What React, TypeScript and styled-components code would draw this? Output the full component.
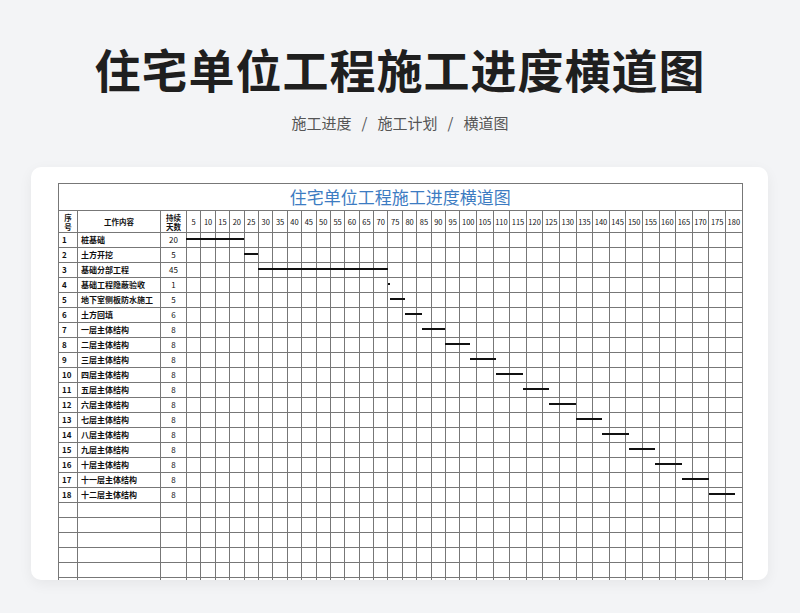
import styled, { createGlobalStyle } from "styled-components";

const GlobalStyle = createGlobalStyle`
  body {
    margin: 0;
    background: #f3f4f6;
    font-family: "Noto Sans CJK SC", "Noto Sans", sans-serif;
  }
`;

const Page = styled.div`
  width: 800px;
  height: 613px;
  display: flex;
  flex-direction: column;
  align-items: center;
  overflow: hidden;
`;

const Title = styled.h1`
  margin: 38px 0 0;
  font-size: 46px;
  line-height: 60px;
  font-weight: 700;
  color: #1f1f1f;
  letter-spacing: 1px;
`;

const Crumbs = styled.div`
  margin-top: 14px;
  display: flex;
  gap: 10px;
  font-size: 15px;
  color: #555;
`;

const Card = styled.div`
  margin-top: 34px;
  width: 737px;
  height: 413px;
  box-sizing: border-box;
  margin-left: -1px;
  background: #fff;
  border-radius: 10px;
  padding: 16px 0 0 27px;
  overflow: hidden;
  box-shadow: 0 4px 14px rgba(0, 0, 0, 0.06);
`;

const Sheet = styled.div`
  position: relative;
  width: 684px;
`;

const Table = styled.table`
  border-collapse: collapse;
  table-layout: fixed;
  width: 684px;
  font-size: 8px;
  color: #111;
  td {
    border: 1px solid #777;
    padding: 0;
    height: 14px;
    line-height: 14px;
    overflow: hidden;
    white-space: nowrap;
  }
`;

const SheetTitle = styled.td`
  && {
    height: 26px;
    font-size: 17px;
    color: #3d7cc2;
    text-align: center;
  }
`;

const Head = styled.td<{ $bold?: boolean }>`
  && {
    height: 21px;
    line-height: 9px;
    text-align: center;
    font-weight: ${(p) => (p.$bold ? 700 : 400)};
    font-size: ${(p) => (p.$bold ? 7.5 : 7.5)}px;
  }
`;

const Cell = styled.td<{ $align?: string; $bold?: boolean }>`
  && {
    text-align: ${(p) => p.$align || "left"};
    font-weight: ${(p) => (p.$bold ? 700 : 400)};
    padding-left: ${(p) => (p.$align ? 0 : 3)}px;
  }
`;

const Bar = styled.div`
  position: absolute;
  height: 2px;
  background: #111;
`;

const tasks: [string, number][] = [
  ["桩基础", 20],
  ["土方开挖", 5],
  ["基础分部工程", 45],
  ["基础工程隐蔽验收", 1],
  ["地下室侧板防水施工", 5],
  ["土方回填", 6],
  ["一层主体结构", 8],
  ["二层主体结构", 8],
  ["三层主体结构", 8],
  ["四层主体结构", 8],
  ["五层主体结构", 8],
  ["六层主体结构", 8],
  ["七层主体结构", 8],
  ["八层主体结构", 8],
  ["九层主体结构", 8],
  ["十层主体结构", 8],
  ["十一层主体结构", 8],
  ["十二层主体结构", 8],
];

const days = Array.from({ length: 36 }, (_, i) => (i + 1) * 5);
const colW = (i: number) => (i < 19 ? 14.4 : 16.6);
const LEFT = 128;

function dayX(d: number) {
  let x = LEFT;
  let rem = d;
  for (let i = 0; i < 36 && rem > 0; i++) {
    const part = Math.min(rem, 5);
    x += (part / 5) * colW(i);
    rem -= part;
  }
  return x;
}

export default function App() {
  let start = 0;
  const bars = tasks.map(([, d], i) => {
    const s = start;
    start += d;
    return { left: dayX(s), width: Math.max(dayX(s + d) - dayX(s), 2), top: 49 + i * 15 + 6 };
  });

  return (
    <Page>
      <GlobalStyle />
      <Title>住宅单位工程施工进度横道图</Title>
      <Crumbs>
        <span>施工进度</span>
        <span>/</span>
        <span>施工计划</span>
        <span>/</span>
        <span>横道图</span>
      </Crumbs>
      <Card>
        <Sheet>
          <Table>
            <colgroup>
              <col style={{ width: 19 }} />
              <col style={{ width: 83 }} />
              <col style={{ width: 26 }} />
              {days.map((d, i) => (
                <col key={d} style={{ width: colW(i) }} />
              ))}
            </colgroup>
            <tbody>
              <tr>
                <SheetTitle colSpan={39}>住宅单位工程施工进度横道图</SheetTitle>
              </tr>
              <tr>
                <Head $bold>序<br />号</Head>
                <Head $bold>工作内容</Head>
                <Head $bold>持续<br />天数</Head>
                {days.map((d) => (
                  <Head key={d}>{d}</Head>
                ))}
              </tr>
              {tasks.map(([name, d], i) => (
                <tr key={name}>
                  <Cell $bold>{i + 1}</Cell>
                  <Cell $bold>{name}</Cell>
                  <Cell $align="center">{d}</Cell>
                  {days.map((x) => (
                    <Cell key={x} />
                  ))}
                </tr>
              ))}
              {Array.from({ length: 8 }, (_, r) => (
                <tr key={"e" + r}>
                  <Cell />
                  <Cell />
                  <Cell />
                  {days.map((x) => (
                    <Cell key={x} />
                  ))}
                </tr>
              ))}
            </tbody>
          </Table>
          {bars.map((b, i) => (
            <Bar key={i} style={{ left: b.left, width: b.width, top: b.top }} />
          ))}
        </Sheet>
      </Card>
    </Page>
  );
}
